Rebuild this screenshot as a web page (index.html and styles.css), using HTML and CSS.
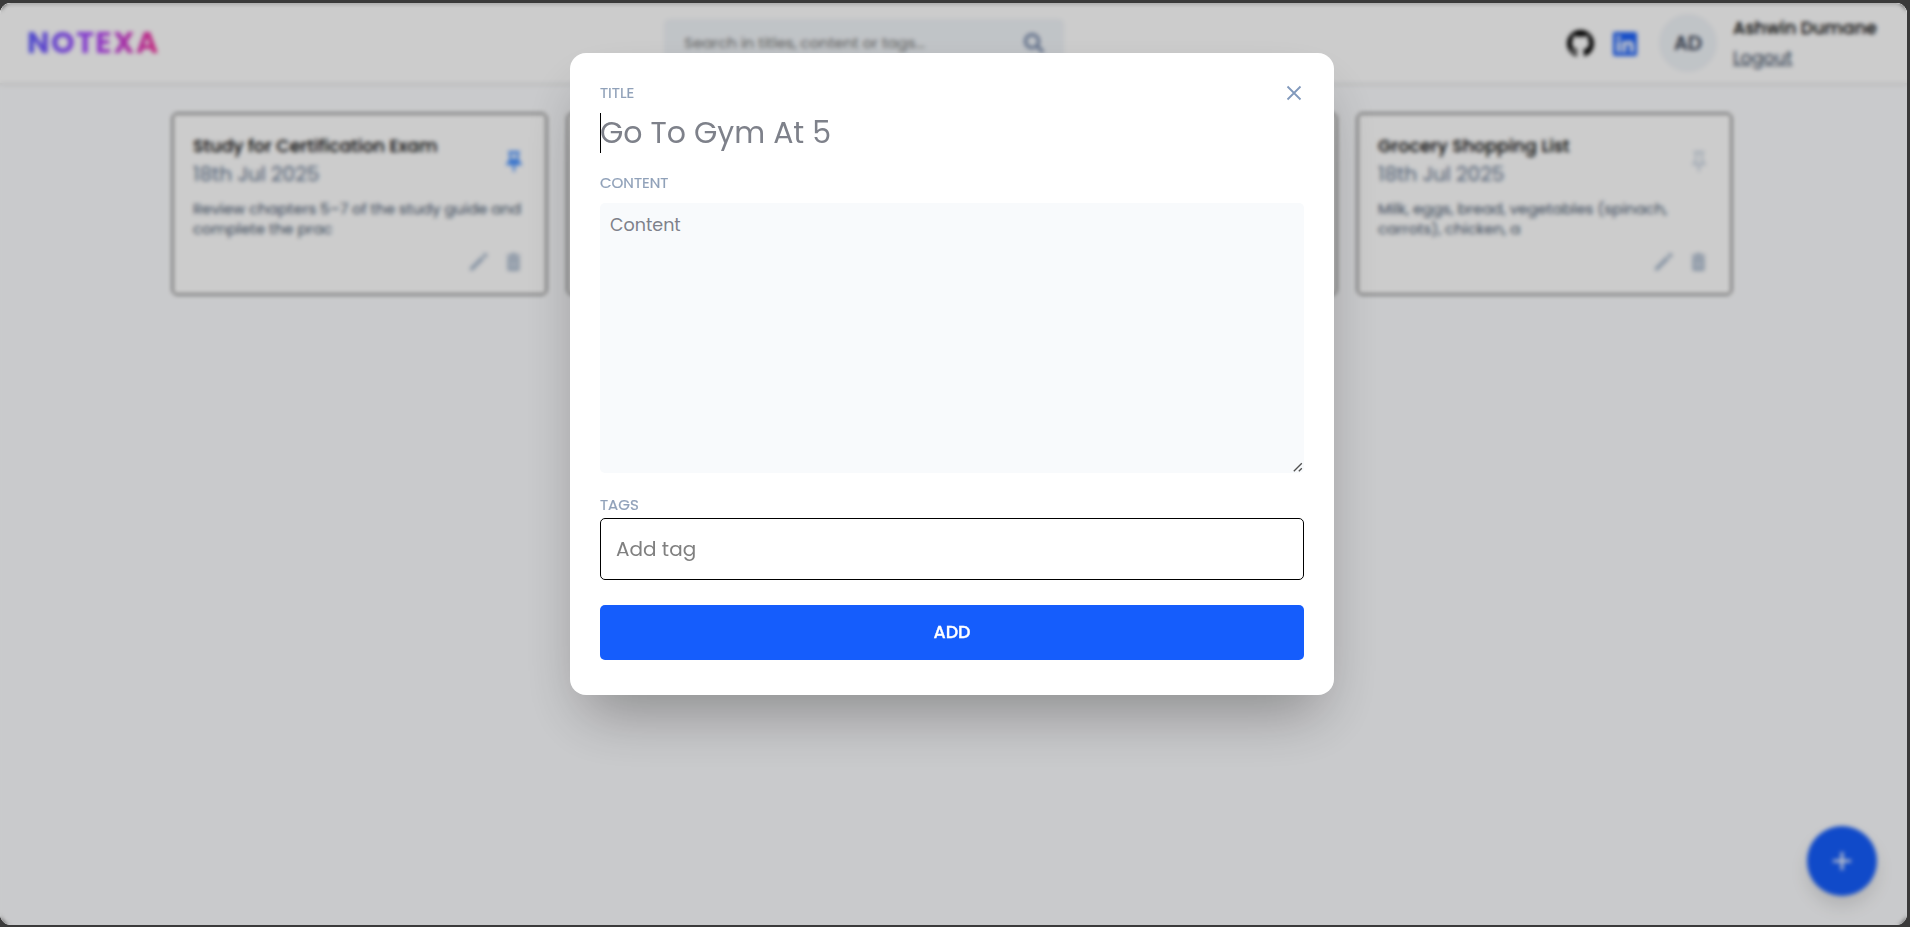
FILE: index.html
```html
<!DOCTYPE html>
<html lang="en">
<head>
<meta charset="utf-8">
<title>Notexa</title>
<link rel="stylesheet" href="styles.css">
</head>
<body>
<svg width="0" height="0" class="sprite" aria-hidden="true">
  <symbol id="pin" viewBox="0 0 16 24"><path fill-rule="evenodd" d="M2 1h12v2.500h-1v7l3 3.500v2H9.200v5L8 23.500l-1.200-2.500v-5H0v-2l3-3.500v-7H2zM5.500 4v5h5V4z"/></symbol>
  <symbol id="pin-outline" viewBox="0 0 16 24"><path fill-rule="evenodd" d="M2.500 1h11v2.500H12v7l3 3.500v2H9.200v5L8 23.500l-1.200-2.500v-5H1v-2l3-3.500v-7H2.500zM6 3.500v7.700L4.200 13.500h7.600L10 11.200V3.500z"/></symbol>
  <symbol id="pencil" viewBox="0 0 20 20"><path d="M1 16L13 4l3 3L4 19H1zM14 3L16.500.5q.6-.6 1.200 0l1.800 1.800q.6.600 0 1.200L17 6z"/></symbol>
  <symbol id="trash" viewBox="0 0 16 20"><path fill-rule="evenodd" d="M1 2h4l1-1.500h4L11 2h4v2.500H1zM1.500 5.500h13V18q0 1.500-1.500 1.500H3Q1.500 19.500 1.500 18zM4.500 8v9h1V8zM7.500 8v9h1V8zM10.500 8v9h1V8z"/></symbol>
</svg>
<div class="app">
  <header class="navbar">
    <h1 class="logo">NOTEXA</h1>
    <div class="search">
      <span class="search-text">Search in titles, content or tags...</span>
      <svg class="search-icon" viewBox="0 0 512 512"><path d="M505 442.700L405.300 343c-4.500-4.500-10.600-7-17-7H372c27.600-35.300 44-79.700 44-128C416 93.100 322.900 0 208 0S0 93.100 0 208s93.100 208 208 208c48.300 0 92.700-16.400 128-44v16.300c0 6.400 2.500 12.500 7 17l99.700 99.700c9.400 9.400 24.600 9.400 33.900 0l28.300-28.300c9.400-9.400 9.400-24.600.1-34zM208 336c-70.700 0-128-57.200-128-128 0-70.700 57.200-128 128-128 70.700 0 128 57.200 128 128 0 70.700-57.200 128-128 128z"/></svg>
    </div>
    <div class="account">
      <svg class="github" viewBox="0 0 16 16"><path d="M8 0C3.580 0 0 3.580 0 8c0 3.540 2.290 6.530 5.470 7.590.4.070.55-.17.550-.38 0-.19-.01-.82-.01-1.490-2.010.37-2.530-.49-2.690-.94-.09-.23-.48-.94-.82-1.130-.28-.15-.68-.52-.01-.53.63-.01 1.080.58 1.230.82.72 1.210 1.870.87 2.330.66.07-.52.28-.87.51-1.070-1.780-.2-3.640-.89-3.640-3.950 0-.87.31-1.590.82-2.150-.08-.2-.36-1.020.08-2.120 0 0 .67-.21 2.200.82.640-.18 1.320-.27 2-.27s1.360.09 2 .27c1.530-1.040 2.200-.82 2.200-.82.44 1.100.16 1.920.08 2.120.51.56.82 1.270.82 2.150 0 3.070-1.870 3.750-3.650 3.950.29.25.54.73.54 1.480 0 1.070-.01 1.930-.01 2.200 0 .21.15.46.55.38A8.010 8.010 0 0 0 16 8c0-4.420-3.580-8-8-8z"/></svg>
      <svg class="linkedin" viewBox="0 0 448 448"><path d="M416 0H31.900C14.300 0 0 14.500 0 32.300v383.400C0 433.500 14.300 448 31.900 448H416c17.600 0 32-14.500 32-32.300V32.300C448 14.500 433.600 0 416 0zM135.400 384H69V170.200h66.500V384zM102.200 141c-21.300 0-38.500-17.300-38.500-38.500S80.900 64 102.200 64c21.200 0 38.500 17.300 38.500 38.500 0 21.300-17.200 38.500-38.500 38.500zm282.100 243h-66.400V280c0-24.800-.5-56.700-34.500-56.700-34.600 0-39.900 27-39.900 54.900V384h-66.400V170.200h63.700v29.200h.9c8.900-16.800 30.600-34.500 62.900-34.500 67.200 0 79.700 44.300 79.700 101.900V384z"/></svg>
      <div class="avatar">AD</div>
      <div class="who"><p class="name">Ashwin Dumane</p><a class="logout">Logout</a></div>
    </div>
  </header>
  <main class="notes">
    <article class="card">
      <div class="card-head"><div><h2 class="card-title">Study for Certification Exam</h2><p class="date">18th Jul 2025</p></div><svg class="pin pinned"><use href="#pin"/></svg></div>
      <p class="excerpt">Review chapters 5–7 of the study guide and<br>complete the prac</p>
      <div class="tools"><svg class="pencil"><use href="#pencil"/></svg><svg class="trash"><use href="#trash"/></svg></div>
    </article>
    <article class="card"></article>
    <article class="card"></article>
    <article class="card">
      <div class="card-head"><div><h2 class="card-title">Grocery Shopping List</h2><p class="date">18th Jul 2025</p></div><svg class="pin"><use href="#pin-outline"/></svg></div>
      <p class="excerpt">Milk, eggs, bread, vegetables (spinach,<br>carrots), chicken, a</p>
      <div class="tools"><svg class="pencil"><use href="#pencil"/></svg><svg class="trash"><use href="#trash"/></svg></div>
    </article>
  </main>
  <button class="fab"><svg viewBox="0 0 20 20"><path d="M10 1v18M1 10h18"/></svg></button>
  <div class="overlay">
    <section class="modal">
      <svg class="close" viewBox="0 0 16 16"><path d="M1.500 1.500l13 13m0-13l-13 13"/></svg>
      <div class="label">TITLE</div>
      <div class="title-input"><span class="caret"></span>Go To Gym At 5</div>
      <div class="label content-label">CONTENT</div>
      <div class="content-input">Content<svg class="grip" viewBox="0 0 10 10"><path d="M.8 9.200l8-8M5.800 9.200l3-3"/></svg></div>
      <div class="label tags-label">TAGS</div>
      <div class="tag-input">Add tag</div>
      <button class="add">ADD</button>
    </section>
  </div>
</div>
</body>
</html>
```
FILE: styles.css
```css
* { box-sizing: border-box; margin: 0; }
html, body { height: 100%; }
body { background: #3a3a3a; font-family: Poppins, Inter, sans-serif; padding: 3px 3px 2px 0; overflow: hidden; }
button { border: 0; font-family: inherit; }
svg { display: block; fill: currentColor; flex: none; }
.sprite { position: absolute; }
.app { position: relative; height: 922px; border-radius: 11px; overflow: hidden; background: #fcfdff; }

.navbar { height: 80px; display: flex; justify-content: space-between; align-items: center; padding: 0 30px 0 27px; background: #fff; box-shadow: 0 1px 4px rgba(0,0,0,.15); }
.logo { font-size: 30px; line-height: 40px; font-weight: 700; letter-spacing: 1.5px; background: linear-gradient(90deg, #615fff, #ad46ff 50%, #f6339a); -webkit-background-clip: text; background-clip: text; color: transparent; }
.search { width: 400px; height: 48px; margin-left: 2px; border-radius: 5px; background: #f1f5f9; display: flex; align-items: center; justify-content: space-between; padding: 0 20px; color: #757575; font-size: 15px; line-height: 20px; }
.search-icon { width: 20px; height: 20px; color: #7588aa; }
.account { display: flex; align-items: center; }
.github { width: 27px; height: 27px; color: #000; margin-right: 19px; }
.linkedin { width: 24px; height: 24px; margin-top: 1px; color: #1f63fa; margin-right: 22px; }
.avatar { width: 58px; height: 58px; border-radius: 50%; background: #f1f5f9; color: #1d293d; font-weight: 500; font-size: 20px; line-height: 58px; text-align: center; margin-right: 16px; }
.who { width: 144px; }
.name { font-size: 17.5px; font-weight: 500; line-height: 30px; white-space: nowrap; }
.logout { display: block; font-size: 17.5px; line-height: 30px; color: #314158; text-decoration: underline; }

.notes { display: grid; grid-template-columns: repeat(4, minmax(0, 1fr)); gap: 20px; padding: 30px 175px 0 172px; }
.card { height: 182px; border: 1px solid #000; border-radius: 5px; background: #fff; padding: 18px 24px 18px 20px; }
.card-head { display: flex; justify-content: space-between; align-items: center; }
.card-title { font-size: 17.5px; line-height: 28px; font-weight: 500; color: #000; white-space: nowrap; }
.date { font-size: 20px; line-height: 28px; color: #62748e; }
.pin { width: 16px; height: 23px; margin-top: 2px; color: #cad5e2; }
.pinned { color: #4a93ff; }
.excerpt { margin-top: 11px; font-size: 15px; line-height: 20px; color: #45556c; white-space: nowrap; }
.tools { display: flex; justify-content: flex-end; gap: 18px; margin-top: 13px; padding-right: 1px; color: #a9b9cd; }
.pencil { width: 19px; height: 20px; }
.trash { width: 15px; height: 20px; }
.fab { position: absolute; right: 30px; bottom: 29px; width: 70px; height: 70px; border-radius: 50%; background: #155dfc; color: #fff; display: grid; place-items: center; box-shadow: 0 10px 18px rgba(0,0,0,.12); }
.fab svg { width: 20px; height: 20px; stroke: #fff; stroke-width: 2.6; }

.overlay { position: absolute; inset: 0; background: rgba(0,0,0,.2); backdrop-filter: blur(2.3px); }
.modal { position: relative; margin: 50px 0 0 570px; width: 764px; height: 642px; border-radius: 16px; background: #fff; padding: 30px; box-shadow: 0 30px 60px -14px rgba(0,0,0,.32); }
.close { position: absolute; right: 32px; top: 32px; width: 16px; height: 16px; stroke: #8199bc; stroke-width: 1.8; }
.label { font-size: 15px; line-height: 20px; color: #90a1b9; -webkit-text-stroke: .2px #90a1b9; }
.title-input { position: relative; margin-top: 10px; font-size: 30px; line-height: 40px; color: #7e818a; }
.caret { position: absolute; left: 0; top: 0; width: 1px; height: 40px; background: #000; }
.content-label { margin-top: 20px; }
.content-input { position: relative; margin-top: 10px; height: 270px; border-radius: 5px; background: #f8fafc; padding: 10px; font-size: 17.5px; line-height: 25px; color: #7e818a; }
.grip { position: absolute; right: 1px; bottom: 1px; width: 10px; height: 10px; stroke: #505050; stroke-width: 1.3; }
.tags-label { margin-top: 20px; padding: 2px 0 3px; }
.tag-input { height: 62px; border: 1px solid #000; border-radius: 5px; padding: 0 15px; font-size: 20px; line-height: 61px; color: #808080; }
.add { display: block; width: 100%; height: 55px; margin-top: 25px; border-radius: 5px; background: #155dfc; color: #fff; font-size: 17.5px; font-weight: 500; padding: 0 0 2px; -webkit-text-stroke: .3px #fff; }
```
